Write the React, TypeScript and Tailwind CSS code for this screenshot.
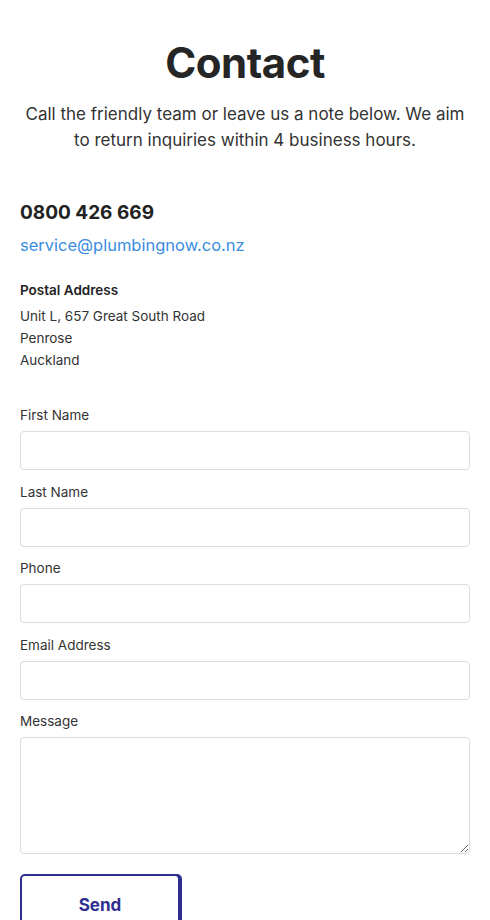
import React from 'react';

const fields = ['First Name', 'Last Name', 'Phone', 'Email Address'];

export default function App() {
  return (
    <div className="min-h-screen bg-white px-5 text-[#222] font-['Inter','Open_Sans',sans-serif]">
      <h1 className="pt-[38px] text-center text-[42px] leading-[50px] font-bold tracking-[-0.5px] text-[#252525]">
        Contact
      </h1>
      <p className="mt-[13px] text-center text-[17px] leading-[26px] text-[#333]">
        Call the friendly team or leave us a note below. We aim to return inquiries within 4 business hours.
      </p>

      <div className="mt-[46px] text-[19px] leading-[28px] font-bold text-[#222]">0800 426 669</div>
      <a href="#" className="mt-[6px] block text-[16.5px] leading-[24px] text-[#3b8de0]">
        service@plumbingnow.co.nz
      </a>

      <div className="mt-[23px] text-[13.5px] leading-[20px] font-semibold text-[#222]">Postal Address</div>
      <div className="mt-[5px] text-[13.5px] leading-[22px] text-[#333]">
        <div>Unit L, 657 Great South Road</div>
        <div>Penrose</div>
        <div>Auckland</div>
      </div>

      <form className="mt-[34px] flex flex-col">
        {fields.map((f) => (
          <label key={f} className="mb-[11.5px] block">
            <span className="block text-[13.5px] leading-[20px] text-[#333]">{f}</span>
            <input
              type="text"
              className="mt-[6px] block h-[39px] w-full rounded-[4px] border border-[#dcdcdc] bg-white px-3"
            />
          </label>
        ))}
        <label className="block">
          <span className="block text-[13.5px] leading-[20px] text-[#333]">Message</span>
          <textarea className="mt-[6px] block h-[117px] w-full rounded-[4px] border border-[#dcdcdc] bg-white px-3" />
        </label>
        <div className="mt-[20px] pb-6">
          <button
            type="button"
            className="h-[64px] w-[160px] rounded-[5px] border-2 border-[#2f2f8f] bg-white text-[17px] font-bold text-[#2f2f8f] shadow-[2px_0_0_#2f2f8f]"
          >
            Send
          </button>
        </div>
      </form>
    </div>
  );
}
